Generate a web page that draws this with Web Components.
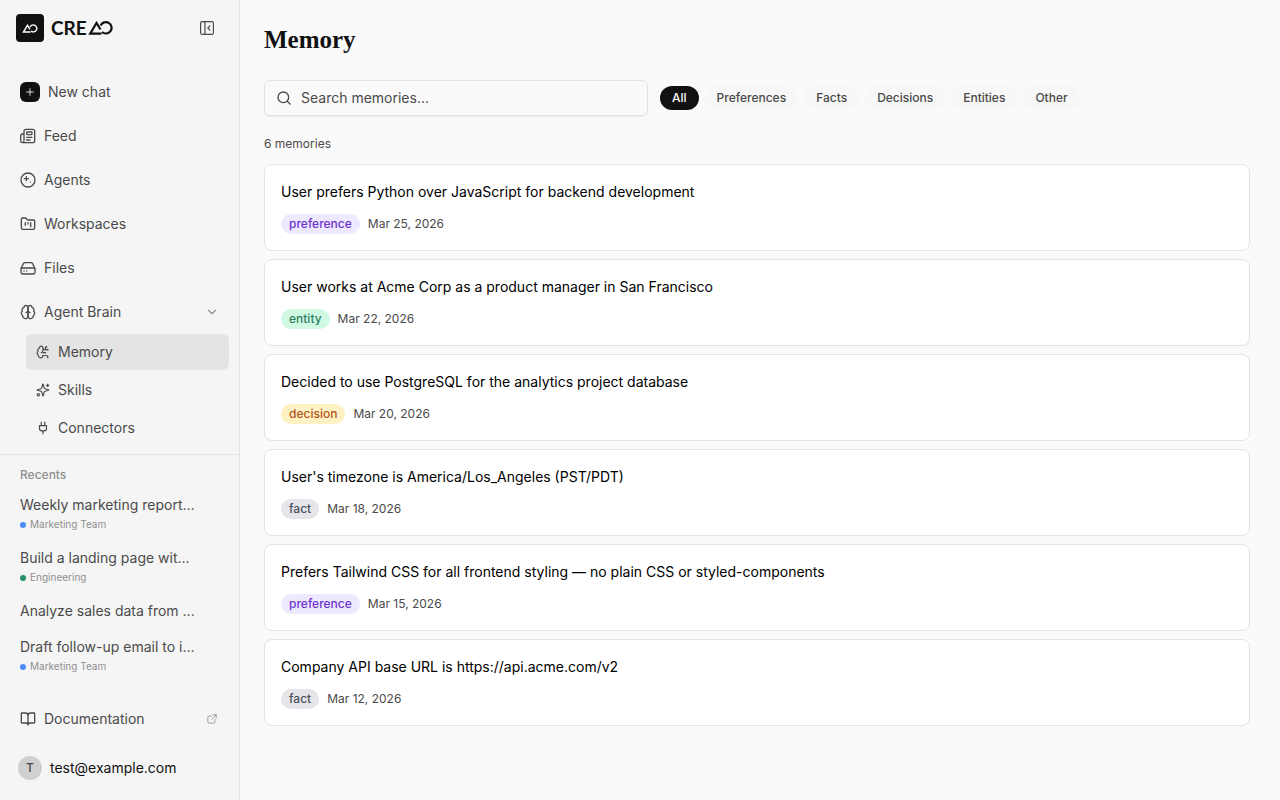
<!DOCTYPE html>
<html lang="en">
<head>
<meta charset="utf-8">
<meta name="viewport" content="width=device-width, initial-scale=1">
<title>Memory</title>
<style>
    :root{
        --ink:#111111;
        --text:#4a4a4a;
        --muted:#8f8f8f;
        --line:#e3e3e3;
        --side:#f5f5f5;
        --page:#fafafa;
    }
    body{
        margin:0;
        background:var(--page);
        color:var(--ink);
        font:14px/20px Inter, "Liberation Sans", sans-serif;
    }
</style>
</head>
<body>
<app-shell>
    <side-bar slot="side">
        <nav-link icon="plus" boxed>New chat</nav-link>
        <nav-link icon="feed">Feed</nav-link>
        <nav-link icon="agents">Agents</nav-link>
        <nav-link icon="workspaces">Workspaces</nav-link>
        <nav-link icon="files">Files</nav-link>
        <nav-link icon="brain" trail="chevron">Agent Brain</nav-link>
        <nav-link slot="sub" icon="circuit" sub active>Memory</nav-link>
        <nav-link slot="sub" icon="sparkles" sub>Skills</nav-link>
        <nav-link slot="sub" icon="plug" sub>Connectors</nav-link>
        <recent-chat slot="recents" team="Marketing Team" color="#4d8df6">Weekly marketing report...</recent-chat>
        <recent-chat slot="recents" team="Engineering" color="#279068">Build a landing page wit...</recent-chat>
        <recent-chat slot="recents">Analyze sales data from ...</recent-chat>
        <recent-chat slot="recents" team="Marketing Team" color="#4d8df6">Draft follow-up email to i...</recent-chat>
        <user-row slot="footer" initial="T">test@example.com</user-row>
    </side-bar>
    <memory-page>
        <search-box slot="tools" label="Search memories..."></search-box>
        <filter-chip slot="filters" active>All</filter-chip>
        <filter-chip slot="filters">Preferences</filter-chip>
        <filter-chip slot="filters">Facts</filter-chip>
        <filter-chip slot="filters">Decisions</filter-chip>
        <filter-chip slot="filters">Entities</filter-chip>
        <filter-chip slot="filters">Other</filter-chip>
        <memory-card kind="preference" date="Mar 25, 2026">User prefers Python over JavaScript for backend development</memory-card>
        <memory-card kind="entity" date="Mar 22, 2026">User works at Acme Corp as a product manager in San Francisco</memory-card>
        <memory-card kind="decision" date="Mar 20, 2026">Decided to use PostgreSQL for the analytics project database</memory-card>
        <memory-card kind="fact" date="Mar 18, 2026">User's timezone is America/Los_Angeles (PST/PDT)</memory-card>
        <memory-card kind="preference" date="Mar 15, 2026">Prefers Tailwind CSS for all frontend styling — no plain CSS or styled-components</memory-card>
        <memory-card kind="fact" date="Mar 12, 2026">Company API base URL is https://api.acme.com/v2</memory-card>
    </memory-page>
</app-shell>

<script>
// all icons are drawn on a 24 unit grid
const ICONS = {
    plus: '<path d="M4 12h16M12 4v16"/>',
    toggle: '<rect x="1" y="1" width="22" height="22" rx="3"/><path d="M8.500 1v22M17 8.500 13.500 12l3.500 3.500"/>',
    feed: '<path d="M4 22h15a3 3 0 0 0 3-3V5a3 3 0 0 0-3-3H9a3 3 0 0 0-3 3v14.500a2.500 2.500 0 0 1-5 0V12a3 3 0 0 1 3-3h2"/><rect x="10" y="6" width="8" height="4" rx="1"/><path d="M10 14h8M10 18h5"/>',
    agents: '<circle cx="12" cy="12" r="10.500"/><path d="M9.500 7v6M6.500 10h6"/><path d="M15.500 14.500v1" stroke-width="1.200"/>',
    workspaces: '<path d="M4 20h16a2 2 0 0 0 2-2V8a2 2 0 0 0-2-2h-7.900a2 2 0 0 1-1.690-.900L9.600 3.900A2 2 0 0 0 7.930 3H4a2 2 0 0 0-2 2v13a2 2 0 0 0 2 2Z"/><path d="M8 10v4M12 10v2M16 10v6"/>',
    files: '<path d="M1.500 13 5 5.600A3 3 0 0 1 7.600 4h8.800A3 3 0 0 1 19 5.600l3.500 7.400"/><rect x="1.500" y="12" width="21" height="9" rx="2.500"/><path d="M6 16.500h.010M10 16.500h.010"/>',
    brain: '<path d="M12 5a3 3 0 1 0-5.997.125 4 4 0 0 0-2.526 5.770 4 4 0 0 0 .556 6.588A4 4 0 1 0 12 18Z"/><path d="M12 5a3 3 0 1 1 5.997.125 4 4 0 0 1 2.526 5.770 4 4 0 0 1-.556 6.588A4 4 0 1 1 12 18Z"/><path d="M15 13a4.500 4.500 0 0 1-3-4 4.500 4.500 0 0 1-3 4"/>',
    circuit: '<path d="M12 5a3 3 0 1 0-5.997.125 4 4 0 0 0-2.526 5.770 4 4 0 0 0 .556 6.588A4 4 0 1 0 12 18"/><path d="M9 13a4.500 4.500 0 0 0 3-4V5M12 13h4M12 18h6a2 2 0 0 1 2 2v1M12 8h8M16 8V5a2 2 0 0 1 2-2"/><circle cx="16" cy="13" r=".5"/><circle cx="18" cy="3" r=".5"/><circle cx="20" cy="21" r=".5"/><circle cx="20" cy="8" r=".5"/>',
    sparkles: '<path d="M9.940 15.500A2 2 0 0 0 8.500 14.060l-6.140-1.580a.5.5 0 0 1 0-.960L8.500 9.940A2 2 0 0 0 9.940 8.500l1.580-6.140a.5.5 0 0 1 .960 0l1.580 6.140a2 2 0 0 0 1.440 1.440l6.140 1.580a.5.5 0 0 1 0 .960l-6.140 1.580a2 2 0 0 0-1.440 1.440l-1.580 6.140a.5.5 0 0 1-.960 0z"/><path d="M20 2v4M22 4h-4"/><circle cx="4" cy="20" r="2"/>',
    plug: '<path d="M12 22v-5M9 8V2M15 8V2M18 8v5a4 4 0 0 1-4 4h-4a4 4 0 0 1-4-4V8Z"/>',
    chevron: '<path d="m6 9 6 6 6-6"/>',
    book: '<path d="M12 7v14M3 18a1 1 0 0 1-1-1V4a1 1 0 0 1 1-1h5a4 4 0 0 1 4 4 4 4 0 0 1 4-4h5a1 1 0 0 1 1 1v13a1 1 0 0 1-1 1h-6a3 3 0 0 0-3 3 3 3 0 0 0-3-3z"/>',
    external: '<path d="M14 2h8v8M22 2 11 13M19 13v6a3 3 0 0 1-3 3H5a3 3 0 0 1-3-3V8a3 3 0 0 1 3-3h6"/>',
    search: '<circle cx="11" cy="11" r="8"/><path d="m21 21-4.300-4.300"/>'
}

class baseElement extends HTMLElement{
    constructor(){
        super();
        this.attachShadow({mode:'open'});
    }
    connectedCallback(){
        this.render()
    }
    render(){
        const template = document.createElement('template');
        template.innerHTML = `<style>${this.getStyles()}</style>${this.getTemplate()}`;
        this.shadowRoot.replaceChildren(template.content.cloneNode(true));
    }
}

class appShell extends baseElement{
    getTemplate(){
        return `
            <slot name="side"></slot>
            <main><slot></slot></main>
        `
    }
    getStyles(){
        return `
            :host{
                display:grid;
                grid-template-columns:240px 1fr;
                min-height:100vh;
            }
            main{
                min-width:0;
            }
        `
    }
}
customElements.define('app-shell', appShell)

class appIcon extends baseElement{
    getTemplate(){
        return `<svg viewBox="0 0 24 24" aria-hidden="true">${ICONS[this.getAttribute('name')]}</svg>`
    }
    getStyles(){
        return `
            :host{
                display:block;
                flex:none;
                width:var(--size, 16px);
                height:var(--size, 16px);
            }
            svg{
                display:block;
                width:100%;
                height:100%;
                overflow:visible;
                fill:none;
                stroke:currentColor;
                stroke-width:2;
                stroke-linecap:round;
                stroke-linejoin:round;
            }
        `
    }
}
customElements.define('app-icon', appIcon)

class brandLogo extends baseElement{
    getTemplate(){
        return `
            <a href="#" aria-label="CREAO">
                <span class="tile">
                    <svg width="16" height="9" viewBox="0 0 25 14">
                        <path d="M13.500 12.500H2.200L8.500 2l4 6.500"/>
                        <path d="M12.600 4.600A5.500 5.500 0 1 1 14 11"/>
                    </svg>
                </span>
                <span class="name">CRE</span>
                <svg class="mark" width="25" height="14" viewBox="0 0 25 14">
                    <path d="M13.500 12.700H2.200L8.500 2l4 6.500"/>
                    <path d="M12.600 4.600A5.700 5.700 0 1 1 14 11"/>
                </svg>
            </a>
        `
    }
    getStyles(){
        return `
            :host{
                display:block;
            }
            a{
                display:flex;
                align-items:center;
                color:var(--ink);
                text-decoration:none;
            }
            .tile{
                display:grid;
                place-items:center;
                width:28px;
                height:28px;
                margin-right:7px;
                border-radius:4px;
                background:var(--ink);
                color:#fff;
            }
            .name{
                margin-right:1px;
                font:700 19px/28px Lato, sans-serif;
            }
            svg{
                fill:none;
                stroke:currentColor;
                stroke-width:2.200;
            }
        `
    }
}
customElements.define('brand-logo', brandLogo)

class sideBar extends baseElement{
    getTemplate(){
        return `
            <header>
                <brand-logo></brand-logo>
                <button type="button" aria-label="Collapse sidebar"><app-icon name="toggle"></app-icon></button>
            </header>
            <nav>
                <div class="links"><slot></slot></div>
                <div class="sub"><slot name="sub"></slot></div>
            </nav>
            <section>
                <h2>Recents</h2>
                <slot name="recents"></slot>
            </section>
            <footer>
                <nav-link icon="book" trail="external">Documentation</nav-link>
                <slot name="footer"></slot>
            </footer>
        `
    }
    getStyles(){
        return `
            :host{
                display:flex;
                flex-direction:column;
                box-sizing:border-box;
                border-right:1px solid var(--line);
                background:var(--side);
                color:var(--text);
            }
            header{
                display:flex;
                align-items:center;
                justify-content:space-between;
                padding:14px 24px 14px 16px;
            }
            button{
                --size:14px;
                padding:1px;
                border:0;
                background:none;
                color:inherit;
                cursor:pointer;
            }
            nav{
                padding:18px 10px 8px;
                border-bottom:1px solid var(--line);
            }
            .links{
                display:grid;
                gap:8px;
            }
            .sub{
                display:grid;
                gap:2px;
                margin:4px 0 0 16px;
            }
            section{
                flex:1;
                padding:12px 20px;
            }
            h2{
                margin:0 0 4px;
                color:var(--muted);
                font-size:12px;
                font-weight:500;
                line-height:16px;
            }
            footer{
                display:grid;
                gap:11px;
                padding:0 10px 12px;
            }
        `
    }
}
customElements.define('side-bar', sideBar)

class navLink extends baseElement{
    getTemplate(){
        const trail = this.getAttribute('trail');
        return `
            <a href="#" ${this.hasAttribute('active') ? 'aria-current="page"' : ''}>
                <span class="icon"><app-icon name="${this.getAttribute('icon')}"></app-icon></span>
                <slot></slot>
                ${trail ? `<app-icon class="trail ${trail}" name="${trail}"></app-icon>` : ''}
            </a>
        `
    }
    getStyles(){
        return `
            :host{
                display:block;
            }
            a{
                display:flex;
                align-items:center;
                gap:8px;
                height:36px;
                padding:0 10px;
                border-radius:6px;
                color:inherit;
                text-decoration:none;
            }
            a:hover{
                background:#ececec;
            }
            a[aria-current]{
                background:#e4e4e4;
            }
            :host([sub]) .icon{
                --size:14px;
            }
            :host([boxed]) .icon{
                --size:10px;
                display:grid;
                place-items:center;
                width:20px;
                height:20px;
                border-radius:6px;
                background:var(--ink);
                color:#fff;
            }
            .trail{
                --size:14px;
                margin-left:auto;
                color:var(--muted);
            }
            .trail.external{
                --size:10px;
                margin-right:2px;
            }
        `
    }
}
customElements.define('nav-link', navLink)

class recentChat extends baseElement{
    getTemplate(){
        const team = this.getAttribute('team');
        return `
            <a href="#">
                <span class="title"><slot></slot></span>
                ${team ? `<span class="team"><i></i>${team}</span>` : ''}
            </a>
        `
    }
    getStyles(){
        return `
            :host{
                display:block;
            }
            a{
                display:block;
                padding:8px 0;
                color:inherit;
                text-decoration:none;
            }
            .title{
                display:block;
                white-space:nowrap;
            }
            .team{
                display:flex;
                align-items:center;
                gap:4px;
                margin-top:2px;
                color:var(--muted);
                font-size:10px;
                line-height:15px;
            }
            i{
                width:6px;
                height:6px;
                border-radius:50%;
                background:${this.getAttribute('color')};
            }
        `
    }
}
customElements.define('recent-chat', recentChat)

class userRow extends baseElement{
    getTemplate(){
        return `
            <button type="button">
                <span class="avatar">${this.getAttribute('initial')}</span>
                <slot></slot>
            </button>
        `
    }
    getStyles(){
        return `
            :host{
                display:block;
            }
            button{
                display:flex;
                align-items:center;
                gap:8px;
                width:100%;
                height:40px;
                padding:0 8px;
                border:0;
                background:none;
                color:var(--ink);
                font:inherit;
                cursor:pointer;
            }
            .avatar{
                display:grid;
                place-items:center;
                width:24px;
                height:24px;
                border-radius:50%;
                background:#d0d0d0;
                color:var(--text);
                font-size:12px;
                font-weight:500;
            }
        `
    }
}
customElements.define('user-row', userRow)

class memoryPage extends baseElement{
    getTemplate(){
        const total = this.querySelectorAll('memory-card').length;
        return `
            <h1>Memory</h1>
            <div class="tools">
                <slot name="tools"></slot>
                <div class="filters"><slot name="filters"></slot></div>
            </div>
            <p>${total} memories</p>
            <div class="list"><slot></slot></div>
        `
    }
    getStyles(){
        return `
            :host{
                display:block;
                padding:24px 30px 24px 24px;
            }
            h1{
                margin:0 0 24px;
                font:700 25px/32px "Liberation Serif", serif;
            }
            .tools{
                display:flex;
                align-items:center;
                gap:12px;
            }
            .filters{
                display:flex;
                flex-wrap:wrap;
                gap:6px;
            }
            p{
                margin:20px 0 12px;
                color:var(--text);
                font-size:12px;
                line-height:16px;
            }
            .list{
                display:grid;
                gap:8px;
            }
        `
    }
}
customElements.define('memory-page', memoryPage)

class searchBox extends baseElement{
    getTemplate(){
        const label = this.getAttribute('label');
        return `
            <label for="query"><app-icon name="search"></app-icon></label>
            <input id="query" type="search" placeholder="${label}" aria-label="${label}">
        `
    }
    getStyles(){
        return `
            :host{
                display:flex;
                align-items:center;
                gap:9px;
                box-sizing:border-box;
                flex:0 1 384px;
                height:36px;
                padding:0 11px;
                border:1px solid var(--line);
                border-radius:6px;
                box-shadow:0 1px 2px rgba(0, 0, 0, 0.05);
                color:var(--text);
            }
            input{
                flex:1;
                min-width:0;
                padding:0;
                border:0;
                outline:0;
                background:none;
                color:var(--ink);
                font:inherit;
            }
            input::placeholder{
                color:var(--text);
                opacity:1;
            }
        `
    }
}
customElements.define('search-box', searchBox)

class filterChip extends baseElement{
    getTemplate(){
        return `<button type="button" aria-pressed="${this.hasAttribute('active')}"><slot></slot></button>`
    }
    getStyles(){
        return `
            :host{
                display:block;
            }
            button{
                display:block;
                height:24px;
                padding:0 12px;
                border:0;
                border-radius:12px;
                background:#f7f7f7;
                color:var(--text);
                font:500 12px/24px Inter, sans-serif;
                cursor:pointer;
            }
            button[aria-pressed="true"]{
                background:var(--ink);
                color:#fff;
            }
        `
    }
}
customElements.define('filter-chip', filterChip)

class memoryCard extends baseElement{
    getTemplate(){
        const kind = this.getAttribute('kind');
        return `
            <article>
                <p><slot></slot></p>
                <div class="meta">
                    <span class="badge ${kind}">${kind}</span>
                    <time>${this.getAttribute('date')}</time>
                </div>
            </article>
        `
    }
    getStyles(){
        return `
            :host{
                display:block;
            }
            article{
                padding:16px;
                border:1px solid var(--line);
                border-radius:8px;
                background:#fff;
            }
            p{
                margin:0 0 11px;
                color:#000;
                line-height:22px;
            }
            .meta{
                display:flex;
                align-items:center;
                gap:8px;
                color:var(--text);
                font-size:12px;
                line-height:20px;
            }
            .badge{
                padding:0 8px;
                border-radius:10px;
                font-weight:500;
            }
            .preference{
                background:#ede9fe;
                color:#6d33d0;
            }
            .entity{
                background:#d0f9e4;
                color:#2f8060;
            }
            .decision{
                background:#fef1c4;
                color:#b4541c;
            }
            .fact{
                background:#e5e5ea;
                color:#4b5060;
            }
        `
    }
}
customElements.define('memory-card', memoryCard)
</script>
</body>
</html>
